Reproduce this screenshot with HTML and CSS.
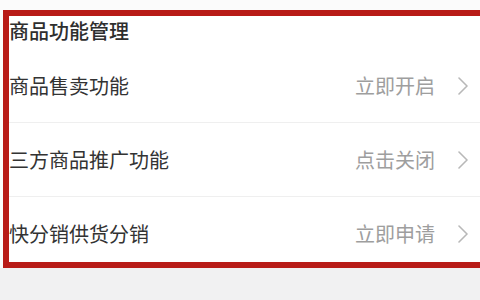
FILE: index.html
```html
<!DOCTYPE html>
<html lang="zh-CN">
<head>
<meta charset="utf-8">
<title>商品功能管理</title>
<link rel="stylesheet" href="styles.css">
</head>
<body>
<div class="page">
  <section class="card">
    <h2 class="title">商品功能管理</h2>
    <div class="row">
      <span class="label">商品售卖功能</span>
      <span class="action">立即开启
        <svg class="chev" viewBox="0 0 10 18" width="10" height="18"><path d="M1 1 L9 9 L1 17" fill="none" stroke="#b8b8b8" stroke-width="1.6" stroke-linecap="round" stroke-linejoin="round"/></svg>
      </span>
    </div>
    <div class="row">
      <span class="label">三方商品推广功能</span>
      <span class="action">点击关闭
        <svg class="chev" viewBox="0 0 10 18" width="10" height="18"><path d="M1 1 L9 9 L1 17" fill="none" stroke="#b8b8b8" stroke-width="1.6" stroke-linecap="round" stroke-linejoin="round"/></svg>
      </span>
    </div>
    <div class="row">
      <span class="label">快分销供货分销</span>
      <span class="action">立即申请
        <svg class="chev" viewBox="0 0 10 18" width="10" height="18"><path d="M1 1 L9 9 L1 17" fill="none" stroke="#b8b8b8" stroke-width="1.6" stroke-linecap="round" stroke-linejoin="round"/></svg>
      </span>
    </div>
  </section>
</div>
</body>
</html>
```
FILE: styles.css
```css
html, body {
  margin: 0;
  padding: 0;
  width: 480px;
  height: 300px;
  overflow: hidden;
  background: #f1f1f2;
  font-family: "Noto Sans CJK SC", "Noto Sans", sans-serif;
}

.page {
  padding: 10px 0 0 3px;
  background: linear-gradient(#fbfbfb 0, #fbfbfb 268px, #f1f1f2 268px);
  height: 290px;
}

.card {
  box-sizing: content-box;
  height: 246px;
  overflow: hidden;
  background: #ffffff;
  border-top: 6px solid #b81b17;
  border-left: 6px solid #b81b17;
  border-bottom: 6px solid #b81b17;
}

.title {
  margin: 0;
  box-sizing: border-box;
  height: 33px;
  padding-bottom: 4px;
  display: flex;
  align-items: center;
  font-size: 20px;
  font-weight: 500;
  color: #2e2e2e;
}

.row {
  flex: none;
  height: 73px;
  display: flex;
  align-items: center;
  justify-content: space-between;
  border-bottom: 1px solid #efefef;
  padding-right: 12px;
}

.label {
  font-size: 20px;
  color: #333333;
}

.action {
  display: flex;
  align-items: center;
  gap: 23px;
  font-size: 20px;
  color: #9e9e9e;
}

.chev {
  display: block;
}
```
